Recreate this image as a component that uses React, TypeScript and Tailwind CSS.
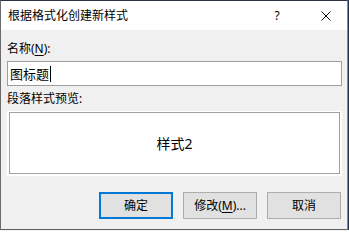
import React from "react";

const font = { fontFamily: "'Noto Sans', 'Noto Sans CJK SC', sans-serif" };

export default function App() {
  return (
    <div className="w-[349px] h-[231px] flex flex-col bg-[#f0f0f0] overflow-hidden" style={font}>
      <div className="flex h-[230px]">
        <div className="w-[348px] h-[230px] flex flex-col border-l border-r border-b border-t border-l-[#6b6b6b] border-r-[#8a8a8a] border-b-[#5f5f5f] border-t-[#2a3443] bg-[#f0f0f0]">
          {/* title bar */}
          <div className="h-[29px] bg-white flex items-center pl-[7px] text-[12px] leading-[16px] text-black">
            <span className="flex-1 pt-[1px]">根据格式化创建新样式</span>
            <span className="w-[12px] text-center mr-[38px] text-[12px]">?</span>
            <svg width="10" height="10" viewBox="0 0 10 10" className="mr-[16px]">
              <path d="M0.5 0.5 L9.5 9.5 M9.5 0.5 L0.5 9.5" stroke="#111" strokeWidth="1" />
            </svg>
          </div>
          {/* body */}
          <div className="flex-1 flex flex-col pl-[6px] pr-[5px] pt-[11px] text-[12px] text-black">
            <div className="h-[16px] leading-[16px]">
              名称(<span className="underline underline-offset-2">N</span>):
            </div>
            <div className="mt-[4px] h-[25px] bg-white border border-[#9e9e9e] flex items-center pl-[2px]">
              <span className="leading-[16px] text-[13px]">图标题</span>
              <span className="w-[1px] h-[16px] bg-black ml-[1px]" />
            </div>
            <div className="mt-[5px] h-[16px] leading-[16px]">段落样式预览:</div>
            <div className="mt-[4px] h-[65px] bg-white pl-[2px] pt-[1px] pr-[2px] pb-[2px]">
              <div className="w-full h-full border border-[#a0a0a0] flex items-center justify-center text-[14px]">
                样式2
              </div>
            </div>
            <div className="mt-[16px] flex justify-end gap-[10px] pr-[1px]">
              <button className="w-[74px] h-[27px] bg-[#e1e1e1] border-2 border-[#0078d7] text-[12px] leading-[16px]">
                确定
              </button>
              <button className="w-[74px] h-[27px] bg-[#e1e1e1] border border-[#adadad] text-[12px] leading-[16px]">
                修改(<span className="underline underline-offset-2">M</span>)...
              </button>
              <button className="w-[74px] h-[27px] bg-[#e1e1e1] border border-[#adadad] text-[12px] leading-[16px]">
                取消
              </button>
            </div>
          </div>
        </div>
        <div className="w-[1px] h-[230px] bg-[#22304a]" />
      </div>
      <div className="h-[1px] bg-[#f4f4f4]" />
    </div>
  );
}
